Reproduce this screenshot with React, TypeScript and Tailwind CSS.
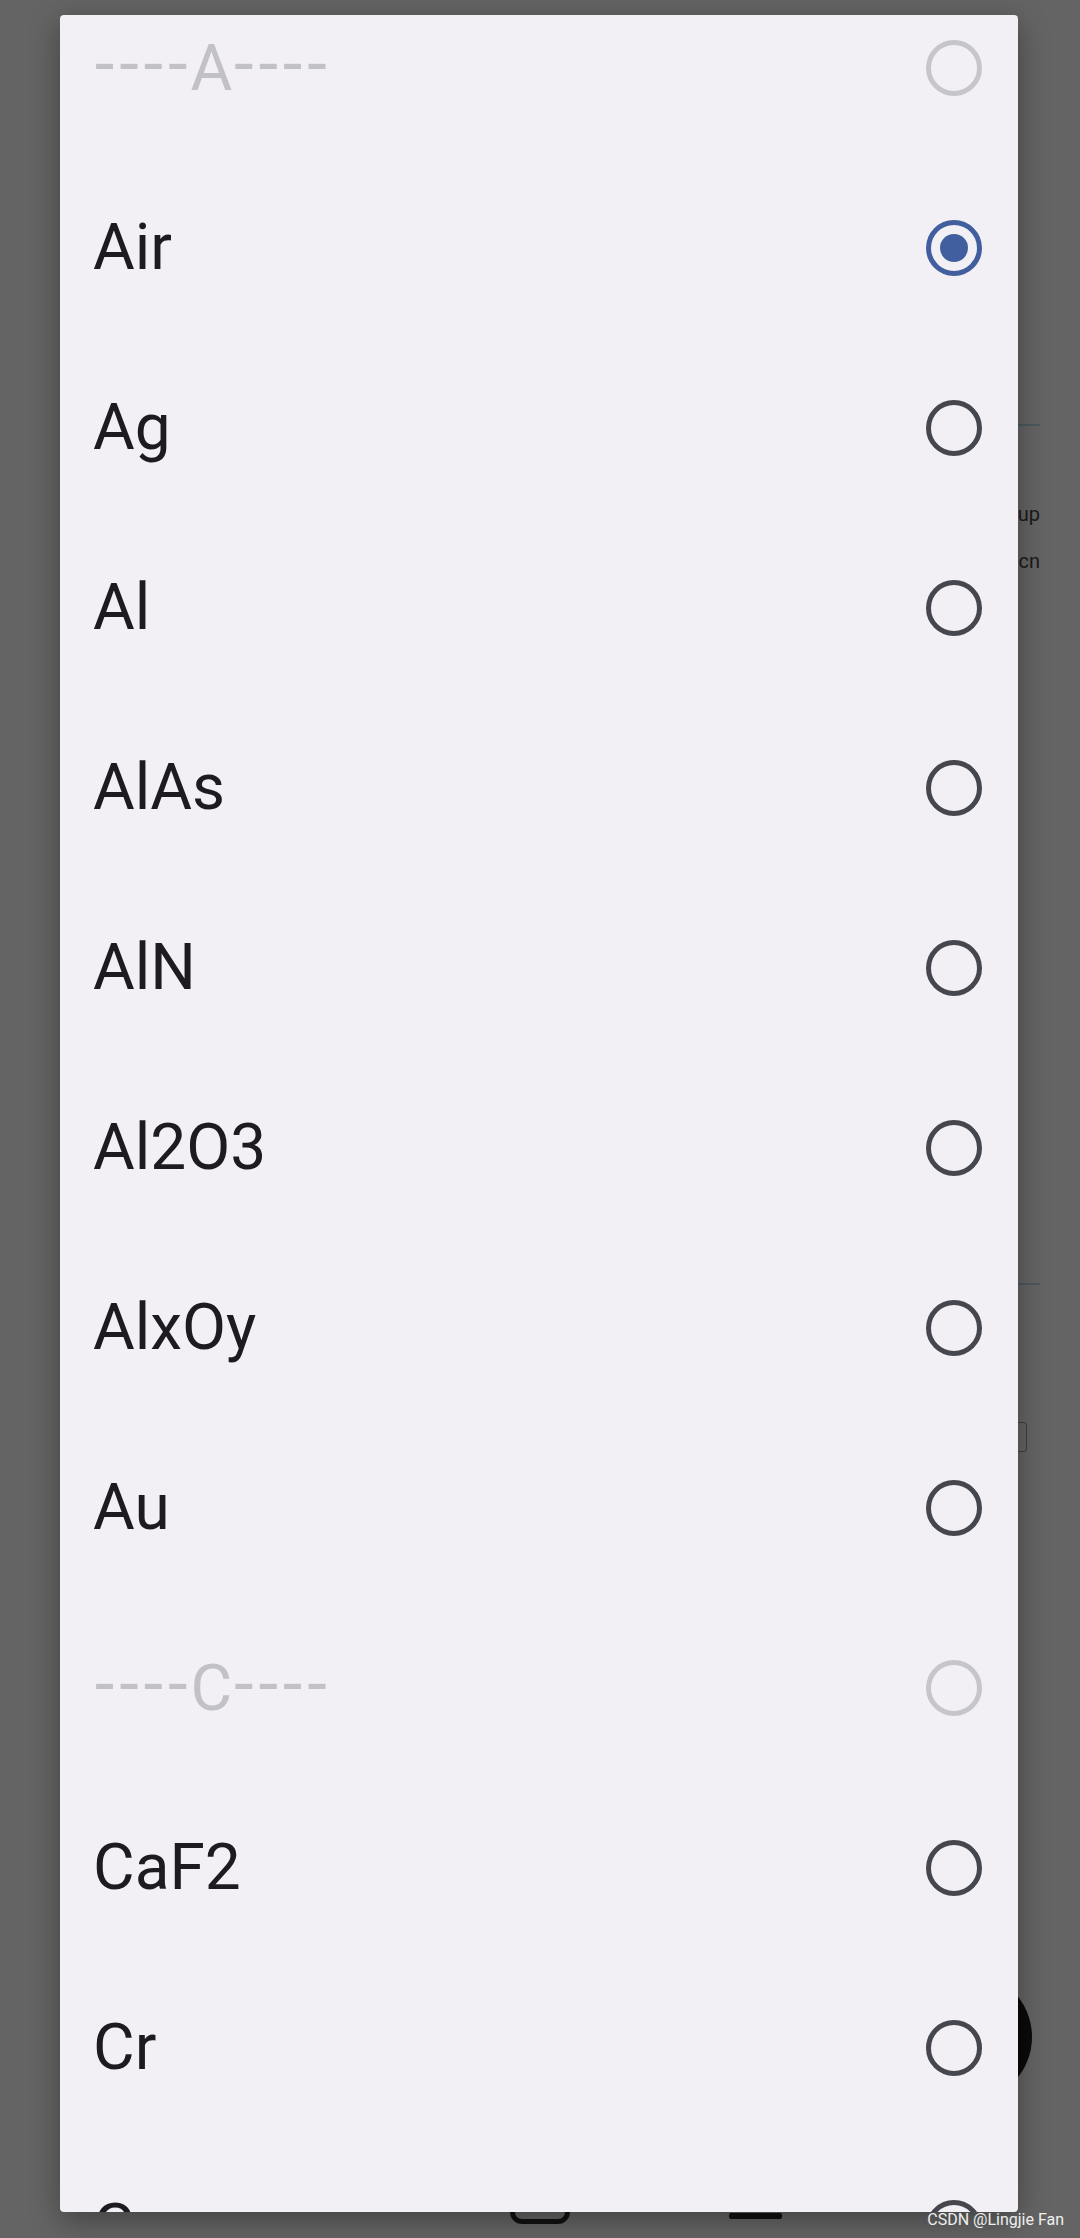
import React from "react";

type Item = { label: string; kind: "header" | "item"; selected?: boolean };

const items: Item[] = [
  { label: "A", kind: "header" },
  { label: "Air", kind: "item", selected: true },
  { label: "Ag", kind: "item" },
  { label: "Al", kind: "item" },
  { label: "AlAs", kind: "item" },
  { label: "AlN", kind: "item" },
  { label: "Al2O3", kind: "item" },
  { label: "AlxOy", kind: "item" },
  { label: "Au", kind: "item" },
  { label: "C", kind: "header" },
  { label: "CaF2", kind: "item" },
  { label: "Cr", kind: "item" },
  { label: "Cu", kind: "item" },
];

function Radio({ state }: { state: "on" | "off" | "disabled" }) {
  if (state === "on") {
    return (
      <div className="w-[56px] h-[56px] rounded-full border-[5.5px] border-[#415f9e] flex items-center justify-center">
        <div className="w-[28px] h-[28px] rounded-full bg-[#415f9e]" />
      </div>
    );
  }
  if (state === "disabled") {
    return <div className="w-[56px] h-[56px] rounded-full border-[5.5px] border-[#c6c5ca]" />;
  }
  return <div className="w-[56px] h-[56px] rounded-full border-[5.5px] border-[#46464f]" />;
}

function Dashes() {
  return (
    <span className="relative -top-[6px] font-['DejaVu_Sans',sans-serif] text-[64px] tracking-[1.3px]">----</span>
  );
}

export default function App() {
  return (
    <div className="relative w-[1080px] h-[2238px] overflow-hidden bg-[#646464] font-['Roboto',sans-serif]">
      {/* dimmed underlying page */}
      <div className="flex flex-col items-end pr-[40px] pt-[424px]">
        <div className="w-[300px] h-[2px] bg-[#4c585f]" />
        <div className="mt-[75px] text-[20px] leading-[26px] text-[#1a1a1a]">Setup</div>
        <div className="mt-[21px] text-[20px] leading-[26px] text-[#1a1a1a]">labcn</div>
        <div className="mt-[709px] w-[300px] h-[2px] bg-[#4c585f]" />
        <div className="mt-[137px] mr-[13px] w-[200px] h-[30px] rounded-[3px] border-[1.5px] border-[#3f3f3f]" />
        <div className="mt-[34px] mr-[35px] w-[14px] h-[16px] rounded-full bg-[#111]" />
        <div className="mt-[470px] mr-[8px] w-[130px] h-[130px] rounded-full bg-[#0a0a0a]" />
      </div>
      <div className="absolute left-0 right-0 top-[2184px] flex items-start pl-[510px] gap-[159px]">
        <div className="w-[60px] h-[40px] rounded-[12px] border-[5px] border-[#111]" />
        <div className="w-[53px] h-[6px] rounded-[2px] bg-[#111] mt-[29px]" />
      </div>

      {/* dialog */}
      <div className="absolute left-[60px] top-[15px] w-[958px] h-[2197px] rounded-[4px] bg-[#f2f0f5] overflow-hidden shadow-[0_8px_30px_rgba(0,0,0,0.35)]">
        <div className="-mt-[37px] flex flex-col">
          {items.map((it, i) => (
            <div key={i} className="h-[180px] flex items-center justify-between pl-[33px] pr-[36px]">
              {it.kind === "header" ? (
                <span className="text-[64px] leading-none text-[#c2c1c6] whitespace-nowrap">
                  <Dashes />
                  {it.label}
                  <Dashes />
                </span>
              ) : (
                <span className="text-[64px] leading-none text-[#1d1b20] whitespace-nowrap">{it.label}</span>
              )}
              <Radio state={it.kind === "header" ? "disabled" : it.selected ? "on" : "off"} />
            </div>
          ))}
        </div>
      </div>

      {/* watermark */}
      <div className="absolute right-[16px] bottom-[10px] text-[16px] leading-none text-white/90">CSDN @Lingjie Fan</div>
    </div>
  );
}
